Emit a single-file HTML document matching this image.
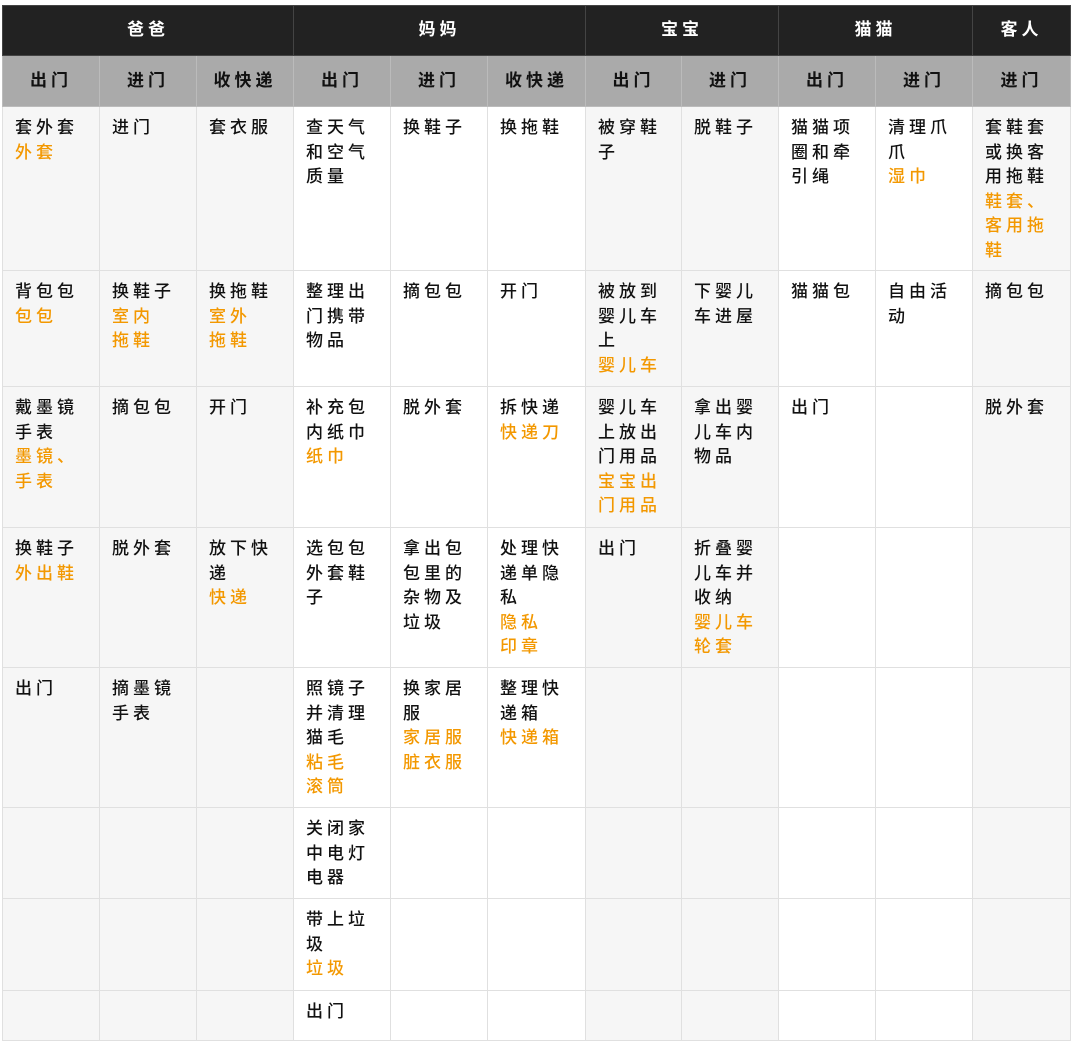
<!DOCTYPE html>
<html><head><meta charset="utf-8"><style>
body{margin:0;background:#fff;width:1080px;height:1055px;overflow:hidden}
table{position:absolute;left:2px;top:5px;border-collapse:collapse;table-layout:fixed;font-family:"Liberation Sans","Noto Sans CJK SC",sans-serif;font-size:17px;letter-spacing:4px;font-weight:500}
td{border:1px solid #e0e0e0;vertical-align:top;padding:9px 0 0 12px;line-height:24.5px;color:#111;overflow:hidden}
tr.h1 td{background:#222;color:#fff;text-align:center;vertical-align:middle;padding:0;border:1px solid #444;height:49px;font-weight:bold}
tr.h2 td{background:#aaa;color:#111;text-align:center;vertical-align:middle;padding:0;border:1px solid #bbb;height:50px;font-weight:bold}
.g{background:#f6f6f6}
.o{color:#f39800}
</style></head><body>
<table>
<colgroup><col style="width:97px"><col style="width:97px"><col style="width:97px"><col style="width:97px"><col style="width:97px"><col style="width:98px"><col style="width:96px"><col style="width:97px"><col style="width:97px"><col style="width:97px"><col style="width:98px"></colgroup>
<tr class="h1"><td colspan="3">爸爸</td><td colspan="3">妈妈</td><td colspan="2">宝宝</td><td colspan="2">猫猫</td><td>客人</td></tr>
<tr class="h2"><td>出门</td><td>进门</td><td>收快递</td><td>出门</td><td>进门</td><td>收快递</td><td>出门</td><td>进门</td><td>出门</td><td>进门</td><td>进门</td></tr>
<tr style="height:164px"><td class="g">套外套<br><span class="o">外套</span></td><td class="g">进门</td><td class="g">套衣服</td><td>查天气<br>和空气<br>质量</td><td>换鞋子</td><td>换拖鞋</td><td class="g">被穿鞋<br>子</td><td class="g">脱鞋子</td><td>猫猫项<br>圈和牵<br>引绳</td><td>清理爪<br>爪<br><span class="o">湿巾</span></td><td class="g">套鞋套<br>或换客<br>用拖鞋<br><span class="o">鞋套、<br>客用拖<br>鞋</span></td></tr>
<tr style="height:116px"><td class="g">背包包<br><span class="o">包包</span></td><td class="g">换鞋子<br><span class="o">室内<br>拖鞋</span></td><td class="g">换拖鞋<br><span class="o">室外<br>拖鞋</span></td><td>整理出<br>门携带<br>物品</td><td>摘包包</td><td>开门</td><td class="g">被放到<br>婴儿车<br>上<br><span class="o">婴儿车</span></td><td class="g">下婴儿<br>车进屋</td><td>猫猫包</td><td>自由活<br>动</td><td class="g">摘包包</td></tr>
<tr style="height:141px"><td class="g">戴墨镜<br>手表<br><span class="o">墨镜、<br>手表</span></td><td class="g">摘包包</td><td class="g">开门</td><td>补充包<br>内纸巾<br><span class="o">纸巾</span></td><td>脱外套</td><td>拆快递<br><span class="o">快递刀</span></td><td class="g">婴儿车<br>上放出<br>门用品<br><span class="o">宝宝出<br>门用品</span></td><td class="g">拿出婴<br>儿车内<br>物品</td><td>出门</td><td></td><td class="g">脱外套</td></tr>
<tr style="height:140px"><td class="g">换鞋子<br><span class="o">外出鞋</span></td><td class="g">脱外套</td><td class="g">放下快<br>递<br><span class="o">快递</span></td><td>选包包<br>外套鞋<br>子</td><td>拿出包<br>包里的<br>杂物及<br>垃圾</td><td>处理快<br>递单隐<br>私<br><span class="o">隐私<br>印章</span></td><td class="g">出门</td><td class="g">折叠婴<br>儿车并<br>收纳<br><span class="o">婴儿车<br>轮套</span></td><td></td><td></td><td class="g"></td></tr>
<tr style="height:140px"><td class="g">出门</td><td class="g">摘墨镜<br>手表</td><td class="g"></td><td>照镜子<br>并清理<br>猫毛<br><span class="o">粘毛<br>滚筒</span></td><td>换家居<br>服<br><span class="o">家居服<br>脏衣服</span></td><td>整理快<br>递箱<br><span class="o">快递箱</span></td><td class="g"></td><td class="g"></td><td></td><td></td><td class="g"></td></tr>
<tr style="height:91px"><td class="g"></td><td class="g"></td><td class="g"></td><td>关闭家<br>中电灯<br>电器</td><td></td><td></td><td class="g"></td><td class="g"></td><td></td><td></td><td class="g"></td></tr>
<tr style="height:92px"><td class="g"></td><td class="g"></td><td class="g"></td><td>带上垃<br>圾<br><span class="o">垃圾</span></td><td></td><td></td><td class="g"></td><td class="g"></td><td></td><td></td><td class="g"></td></tr>
<tr style="height:50px"><td class="g"></td><td class="g"></td><td class="g"></td><td>出门</td><td></td><td></td><td class="g"></td><td class="g"></td><td></td><td></td><td class="g"></td></tr>
</table>
</body></html>
